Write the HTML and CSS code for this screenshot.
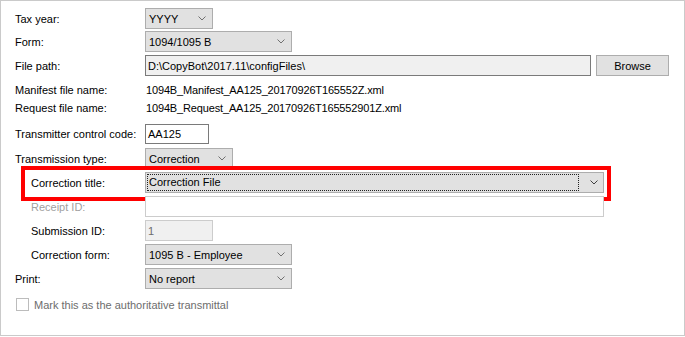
FILE: index.html
```html
<!DOCTYPE html>
<html lang="en">
<head>
    <meta charset="UTF-8">
    <meta name="viewport" content="width=device-width, initial-scale=1.0">
    <title>Transmittal settings</title>
    <link rel="stylesheet" href="styles.css">
</head>
<body>
    <div class="panel">
        <div class="row r-tax">
            <span class="lbl">Tax year:</span>
            <div class="select w-68"><span class="val">YYYY</span><svg class="chev" width="8" height="5" viewBox="0 0 8 5"><polyline points="0.5,0.5 4,4 7.5,0.5"/></svg></div>
        </div>
        <div class="row r-form">
            <span class="lbl">Form:</span>
            <div class="select w-147"><span class="val">1094/1095 B</span><svg class="chev" width="8" height="5" viewBox="0 0 8 5"><polyline points="0.5,0.5 4,4 7.5,0.5"/></svg></div>
        </div>
        <div class="row r-path">
            <span class="lbl">File path:</span>
            <div class="input readonly w-446">D:\CopyBot\2017.11\configFiles\</div>
            <button class="btn">Browse</button>
        </div>
        <div class="line">
            <span class="lbl">Manifest file name:</span>
            <span class="info">1094B_Manifest_AA125_20170926T165552Z.xml</span>
        </div>
        <div class="line r-req">
            <span class="lbl">Request file name:</span>
            <span class="info">1094B_Request_AA125_20170926T165552901Z.xml</span>
        </div>
        <div class="row r-tcc">
            <span class="lbl">Transmitter control code:</span>
            <div class="input w-64">AA125</div>
        </div>
        <div class="row">
            <span class="lbl">Transmission type:</span>
            <div class="select w-88"><span class="val">Correction</span><svg class="chev" width="8" height="5" viewBox="0 0 8 5"><polyline points="0.5,0.5 4,4 7.5,0.5"/></svg></div>
        </div>
        <div class="row sub mark">
            <span class="lbl">Correction title:</span>
            <div class="select focus w-459"><span class="val dotted">Correction File</span><svg class="chev" width="8" height="5" viewBox="0 0 8 5"><polyline points="0.5,0.5 4,4 7.5,0.5"/></svg></div>
            <div class="callout"></div>
        </div>
        <div class="row sub">
            <span class="lbl off">Receipt ID:</span>
            <div class="input disabled w-459"></div>
        </div>
        <div class="row sub">
            <span class="lbl">Submission ID:</span>
            <div class="input readonly soft w-68">1</div>
        </div>
        <div class="row sub">
            <span class="lbl">Correction form:</span>
            <div class="select w-147"><span class="val">1095 B - Employee</span><svg class="chev" width="8" height="5" viewBox="0 0 8 5"><polyline points="0.5,0.5 4,4 7.5,0.5"/></svg></div>
        </div>
        <div class="row r-print">
            <span class="lbl">Print:</span>
            <div class="select w-147"><span class="val">No report</span><svg class="chev" width="8" height="5" viewBox="0 0 8 5"><polyline points="0.5,0.5 4,4 7.5,0.5"/></svg></div>
        </div>
        <div class="check">
            <span class="box"></span>
            <span class="check-text">Mark this as the authoritative transmittal</span>
        </div>
    </div>
</body>
</html>
```

FILE: styles.css
```css
body {
    margin: 0;
    font-family: "Liberation Sans", Arial, sans-serif;
    font-size: 11px;
    color: #000;
    background: #fff;
}
.panel {
    width: 685px;
    height: 336px;
    box-sizing: border-box;
    border: 1px solid #cacaca;
    padding: 7px 0 0 14px;
}
.row {
    display: flex;
    align-items: center;
    height: 21px;
    margin-bottom: 3px;
    position: relative;
}
.r-tax {
    margin-bottom: 2px;
}
.r-path {
    margin-bottom: 5px;
}
.r-tcc {
    height: 20px;
    margin-bottom: 4px;
}
.r-print {
    margin-bottom: 9px;
}
.lbl {
    width: 130px;
    flex-shrink: 0;
}
.sub {
    padding-left: 16px;
}
.sub .lbl {
    width: 114px;
}
.lbl.off {
    color: #a0a0a0;
}
.line {
    display: flex;
    height: 18px;
    align-items: center;
}
.r-req {
    margin-bottom: 7px;
}
.info {
    padding-left: 1px;
    letter-spacing: -0.15px;
}
.select {
    height: 100%;
    box-sizing: border-box;
    border: 1px solid #adadad;
    background: #e1e1e1;
    display: flex;
    align-items: center;
    padding-left: 3px;
}
.select .val {
    flex: 1;
}
.chev {
    margin: 0 6px 0 8px;
    fill: none;
    stroke: #707070;
    stroke-width: 1;
}
.focus {
    padding-left: 1px;
}
.focus .chev {
    stroke: #404040;
    margin-right: 5px;
}
.dotted {
    height: 15px;
    line-height: 15px;
    border: 1px dotted #222;
    padding-left: 1px;
    margin-right: 3px;
}
.input {
    height: 100%;
    box-sizing: border-box;
    border: 1px solid #7a7a7a;
    background: #fff;
    display: flex;
    align-items: center;
    padding-left: 2px;
}
.readonly {
    background: #f0f0f0;
}
.disabled {
    border-color: #cccccc;
}
.soft {
    border-color: #cccccc;
    color: #6d6d6d;
}
.btn {
    margin-left: 5px;
    width: 73px;
    height: 21px;
    border: 1px solid #adadad;
    background: #e1e1e1;
    font: inherit;
    color: #000;
    padding: 0;
}
.callout {
    position: absolute;
    left: 6px;
    top: -6px;
    width: 590px;
    height: 35px;
    box-sizing: border-box;
    border: 4px solid #ff0000;
}
.check {
    display: flex;
    align-items: center;
    height: 13px;
    padding-left: 1px;
}
.box {
    width: 13px;
    height: 13px;
    box-sizing: border-box;
    border: 1px solid #bcbcbc;
    background: #fff;
}
.check-text {
    margin-left: 5px;
    color: #6d6d6d;
}
.w-68 { width: 68px; }
.w-64 { width: 64px; }
.w-88 { width: 88px; }
.w-147 { width: 147px; }
.w-446 { width: 446px; }
.w-459 { width: 459px; }
```
